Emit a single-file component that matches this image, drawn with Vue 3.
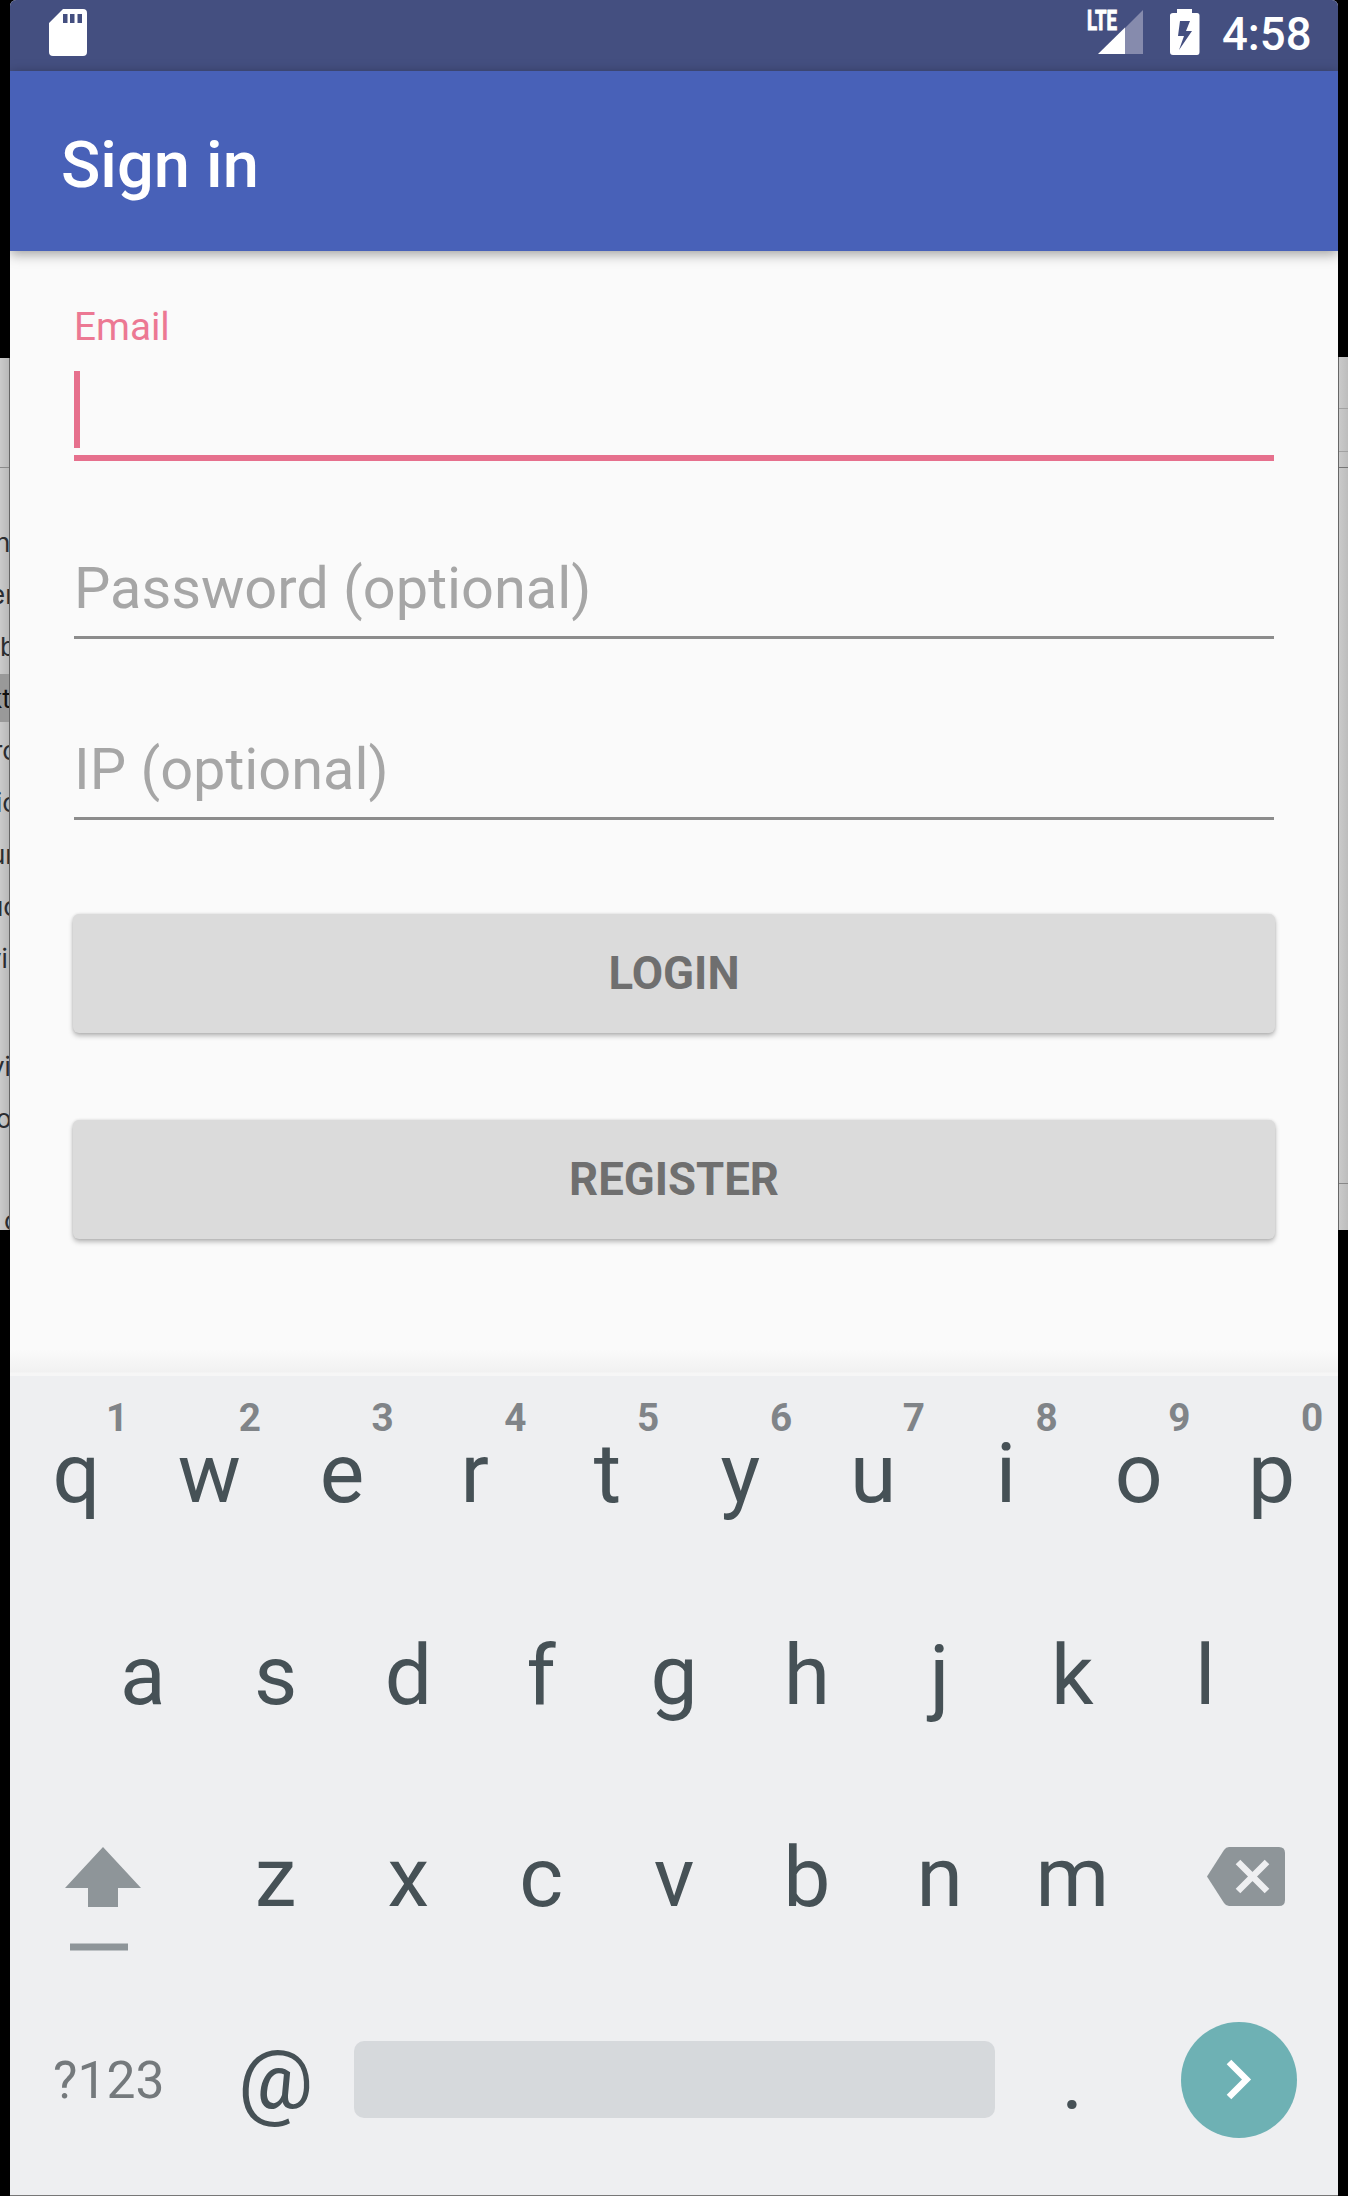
<script setup>
const topRow = 'qwertyuiop'.split('').map((letter, i) => ({ letter, hint: (i + 1) % 10 }))
const middleRow = 'asdfghjkl'.split('')
const bottomRow = 'zxcvbnm'.split('')

const backdropLines = [
  { text: 'n', shift: -5 },
  { text: 'er', shift: -10 },
  { text: 'b', shift: 0 },
  { text: 'kt', shift: -12, selected: true },
  { text: 'ro', shift: -7 },
  { text: 'io', shift: -4 },
  { text: 'ur', shift: -10 },
  { text: 'uc', shift: -12 },
  { text: 'vin', shift: -13 },
  { text: '', shift: 0, height: 56 },
  { text: 'vi', shift: -10 },
  { text: 'o', shift: -4 },
  { text: '', shift: 0, height: 50 },
  { text: 'c', shift: 4 },
]
</script>

<template>
  <div class="stage">
    <aside class="edge edge-left">
      <div class="pane">
        <div class="pane-head"></div>
        <div
          v-for="(line, i) in backdropLines"
          :key="i"
          class="line"
          :class="{ selected: line.selected }"
          :style="{ height: (line.height || 52) + 'px', textIndent: line.shift + 'px' }"
        >{{ line.text }}</div>
      </div>
    </aside>

    <main class="phone">
      <header class="status">
        <svg class="sd" width="38" height="47" viewBox="0 0 38 47">
          <path fill="#fff" fill-rule="evenodd" d="M14 0H34Q38 0 38 4V43Q38 47 34 47H4Q0 47 0 43V14ZM14 5V14H18.500V5ZM21 5V14H25.500V5ZM28.500 5V14H33V5Z" />
        </svg>
        <svg class="signal" width="58" height="46" viewBox="0 0 58 46">
          <path fill="#868bad" d="M56 1V45H38V19Z" />
          <path fill="#fff" d="M11 45L38 18.500V45Z" />
          <text x="0" y="21" textLength="30" lengthAdjust="spacingAndGlyphs">LTE</text>
        </svg>
        <svg class="battery" width="30" height="46" viewBox="0 0 30 46">
          <path fill="#fff" fill-rule="evenodd" d="M7 0H22V4H27Q29.500 4 29.500 6.500V43Q29.500 46 27 46H3Q0 46 0 43V6.500Q0 4 3 4H7ZM10 12L8 27H14L9 41L22 22H16L20 12Z" />
        </svg>
        <span class="clock">4:58</span>
      </header>

      <div class="appbar"><h1>Sign in</h1></div>

      <form class="form" @submit.prevent>
        <label class="email">
          <span class="float-label">Email</span>
          <span class="caret"></span>
        </label>
        <label class="field"><span class="password">Password (optional)</span></label>
        <label class="field second"><span class="ip">IP (optional)</span></label>
        <button class="login" type="button">LOGIN</button>
        <button class="register" type="button">REGISTER</button>
        <div class="fade"></div>
      </form>

      <section class="keyboard">
        <div class="row first">
          <div v-for="k in topRow" :key="k.letter" class="key">
            {{ k.letter }}<span class="hint">{{ k.hint }}</span>
          </div>
        </div>
        <div class="row">
          <div v-for="k in middleRow" :key="k" class="key">{{ k }}</div>
        </div>
        <div class="row">
          <div class="shift">
            <svg width="78" height="104" viewBox="0 0 78 104" fill="#8e9599">
              <path d="M39 0L77 41H54V60H24V41H1Z" />
              <path d="M6 96.500H64V103.500H6Z" />
            </svg>
          </div>
          <div v-for="k in bottomRow" :key="k" class="key">{{ k }}</div>
          <div class="delete">
            <svg width="78" height="59" viewBox="0 0 78 59">
              <path fill="#8e9599" d="M22 0H72Q78 0 78 6V53Q78 59 72 59H22Q19 59 17 56L0 29.500L17 3Q19 0 22 0Z" />
              <path fill="none" stroke="#eeeff1" stroke-width="6.500" d="M31 15L60 44M60 15L31 44" />
            </svg>
          </div>
        </div>
        <div class="row">
          <div class="symbols">?123</div>
          <div class="key at">@</div>
          <div class="space"></div>
          <div class="key dot">.</div>
          <div class="next">
            <svg width="116" height="116" viewBox="0 0 116 116">
              <circle cx="58" cy="58" r="58" fill="#6eb1b4" />
              <path fill="none" stroke="#fff" stroke-width="6.500" d="M48 40L65.500 57.500L48 75" />
            </svg>
          </div>
        </div>
      </section>
    </main>

    <aside class="edge edge-right">
      <div class="pane">
        <div class="cell a"></div>
        <div class="cell b"></div>
        <div class="cell c"></div>
        <div class="cell d"></div>
      </div>
    </aside>
  </div>
</template>

<style>
body {
  margin: 0;
  background: #000;
}
</style>

<style scoped>
.stage {
  display: flex;
  width: 1348px;
  height: 2196px;
  overflow: hidden;
  background: #000;
  font-family: Roboto, "Liberation Sans", sans-serif;
}
.edge {
  flex: none;
  width: 10px;
  padding-top: 358px;
  box-sizing: border-box;
}
.edge-right { padding-top: 357px; }
.pane {
  height: 872px;
  overflow: hidden;
  box-sizing: border-box;
  background: linear-gradient(90deg, #cacaca, #b8b8b8);
  border-right: 1px solid #666;
}
.edge-right .pane {
  height: 873px;
  border-right: 0;
  border-left: 1px solid #666;
  background: linear-gradient(90deg, #cacaca, #bdbdbd);
}
.pane-head {
  height: 110px;
  margin-bottom: 49px;
  box-sizing: border-box;
  border-bottom: 1px solid #8a8a8a;
}
.line {
  font: 26px/52px Inter, "Liberation Sans", sans-serif;
  color: #2b2d30;
  white-space: nowrap;
}
.line.selected {
  background: linear-gradient(#999, #999) 0 1px / 100% 48px no-repeat;
  color: #111;
}
.cell {
  box-sizing: border-box;
  border-bottom: 1px solid #a2a2a2;
}
.cell.a { height: 52px; }
.cell.b { height: 43px; }
.cell.c { height: 16px; border-color: #777; }
.cell.d { height: 716px; border-color: #888; }

.phone {
  flex: none;
  display: flex;
  flex-direction: column;
  width: 1328px;
  height: 2195px;
  border-bottom: 1px solid #777;
  border-radius: 6px 6px 0 0;
  overflow: hidden;
  background: #fafafa;
}
.status {
  display: flex;
  align-items: flex-start;
  flex: none;
  height: 71px;
  box-sizing: border-box;
  padding: 9px 26px 0 39px;
  background: #444f80;
}
.status svg { flex: none; }
.signal {
  margin-left: auto;
  overflow: visible;
}
.signal text {
  fill: #fff;
  stroke: #fff;
  stroke-width: 1px;
  font: 700 27px Roboto, sans-serif;
}
.battery { margin-left: 25px; }
.clock {
  width: 90px;
  margin-left: 22px;
  font-size: 45.500px;
  font-weight: 500;
  line-height: 52px;
  color: #fff;
  white-space: nowrap;
}
.appbar {
  position: relative;
  flex: none;
  height: 180px;
  background: #4861b8;
  box-shadow: 0 3px 12px rgba(0, 0, 0, .38);
}
h1 {
  margin: 0;
  padding: 55px 0 0 51px;
  font-size: 65px;
  font-weight: 500;
  line-height: 78px;
  color: #fff;
}
.form {
  display: flex;
  flex-direction: column;
  flex: none;
  height: 1125px;
  box-sizing: border-box;
  padding: 53px 64px 0;
}
.email {
  display: flex;
  flex-direction: column;
  height: 157px;
  box-sizing: border-box;
  border-bottom: 6px solid #e6708d;
}
.float-label {
  font-size: 38.700px;
  line-height: 46px;
  color: #ec7893;
}
.caret {
  width: 6px;
  height: 77px;
  margin-top: 21px;
  background: #e6708d;
}
.field {
  height: 85px;
  margin-top: 93px;
  box-sizing: border-box;
  border-bottom: 3px solid #8c8c8c;
  font-size: 57.700px;
  line-height: 68px;
  color: #a6a6a6;
}
.field.second { margin-top: 96px; }
button {
  flex: none;
  height: 119px;
  margin: 0 -1px;
  padding: 0;
  border: 0;
  border-radius: 6px;
  background: #dbdbdb;
  box-shadow: 0 3px 5px rgba(0, 0, 0, .26), 0 0 3px rgba(0, 0, 0, .12);
  font: 700 45.500px/119px Roboto, sans-serif;
  color: #6f6f6f;
}
.login { margin-top: 94px; }
.register { margin-top: 87px; }
.fade {
  height: 26px;
  margin: auto -64px 0;
  background: linear-gradient(#fafafa, #f1f1f1 22px, #f6f6f6 23px);
}
.keyboard {
  display: flex;
  flex-direction: column;
  flex: none;
  gap: 8.500px;
  height: 819px;
  background: #eeeff1;
  color: #465156;
}
.row {
  display: flex;
  justify-content: center;
  align-items: center;
  flex: none;
  height: 194px;
}
.row.first .key { top: 1px; }
.key {
  position: relative;
  flex: none;
  width: 132.800px;
  font-size: 84px;
  line-height: 194px;
  text-align: center;
}
.hint {
  position: absolute;
  top: 18px;
  left: 87px;
  width: 40px;
  font-size: 38.700px;
  font-weight: 700;
  line-height: 46px;
  color: #808488;
}
.shift, .delete {
  flex: none;
  display: flex;
  width: 199.200px;
  height: 194px;
  box-sizing: border-box;
}
.shift { padding: 66px 0 0 54px; }
.delete { padding: 66px 0 0 68px; }
.symbols {
  flex: none;
  width: 199.200px;
  box-sizing: border-box;
  padding-left: 43px;
  font-size: 51.600px;
  line-height: 194px;
  color: #74797c;
}
.space {
  flex: none;
  width: 641px;
  height: 77px;
  margin: 0 11.500px 3px;
  border-radius: 10px;
  background: #d6d9dc;
}
.next {
  flex: none;
  display: flex;
  width: 199.200px;
  box-sizing: border-box;
  padding: 0 0 2px 42px;
}
</style>
